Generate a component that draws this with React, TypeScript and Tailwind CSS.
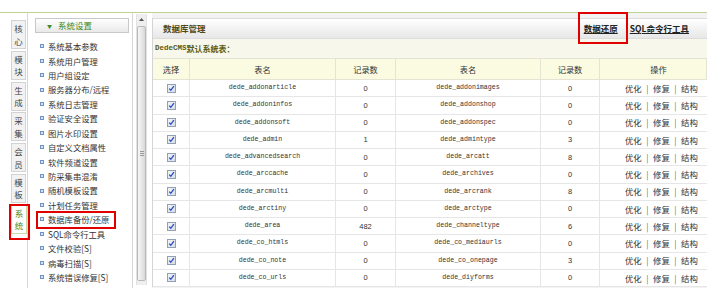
import React from 'react';

const tabs: string[][] = [
  ['核', '心'],
  ['模', '块'],
  ['生', '成'],
  ['采', '集'],
  ['会', '员'],
  ['模', '板'],
  ['系', '统'],
];

const menu: string[] = [
  '系统基本参数',
  '系统用户管理',
  '用户组设定',
  '服务器分布/远程',
  '系统日志管理',
  '验证安全设置',
  '图片水印设置',
  '自定义文档属性',
  '软件频道设置',
  '防采集串混淆',
  '随机模板设置',
  '计划任务管理',
  '数据库备份/还原',
  'SQL命令行工具',
  '文件校验[S]',
  '病毒扫描[S]',
  '系统错误修复[S]',
];

const rows: string[][] = [
  ['dede_addonarticle', '0', 'dede_addonimages', '0'],
  ['dede_addoninfos', '0', 'dede_addonshop', '0'],
  ['dede_addonsoft', '0', 'dede_addonspec', '0'],
  ['dede_admin', '1', 'dede_admintype', '3'],
  ['dede_advancedsearch', '0', 'dede_arcatt', '8'],
  ['dede_arccache', '0', 'dede_archives', '0'],
  ['dede_arcmulti', '0', 'dede_arcrank', '8'],
  ['dede_arctiny', '0', 'dede_arctype', '0'],
  ['dede_area', '482', 'dede_channeltype', '6'],
  ['dede_co_htmls', '0', 'dede_co_mediaurls', '0'],
  ['dede_co_note', '0', 'dede_co_onepage', '3'],
  ['dede_co_urls', '0', 'dede_diyforms', '0'],
];

function Check() {
  return (
    <div className="w-[9px] h-[9px] border border-[#8fa1b8] bg-gradient-to-br from-[#f4f4f4] to-[#d9dde3] flex items-center justify-center">
      <svg width="7" height="7" viewBox="0 0 7 7">
        <path d="M1.2 3.6 L2.8 5.3 L5.9 1.2" fill="none" stroke="#2450c8" strokeWidth="1.3" />
      </svg>
    </div>
  );
}

function Ops() {
  return (
    <div className="flex items-center text-[8.4px] text-[#333] pl-[25px]">
      <span>优化</span>
      <span className="mx-[4.5px] text-[#666]">|</span>
      <span>修复</span>
      <span className="mx-[4.5px] text-[#666]">|</span>
      <span>结构</span>
    </div>
  );
}

export default function App() {
  return (
    <div className="relative w-[723px] h-[297px] bg-white overflow-hidden font-['Noto_Sans_CJK_SC',sans-serif] text-[#333]">
      <div className="h-[12px]" />
      <div className="flex w-[707px] h-[276px] border-t border-[#bad68f]">
        {/* tabs column */}
        <div className="w-[28px] shrink-0 border-r border-[#d6d6d6] flex flex-col gap-[1.8px] pt-[7px] pl-[11px]">
          {tabs.map((t, i) => (
            <div
              key={i}
              className={
                i === 6
                  ? 'w-[16px] h-[29px] border border-[#c6dca6] bg-white text-[#4a8a1c] flex flex-col items-center justify-center text-[8.5px] leading-[12.5px]'
                  : 'w-[15px] h-[29px] border border-[#d3d3d3] bg-[#f2f2f2] text-[#444] flex flex-col items-center justify-center text-[8.5px] leading-[12.5px]'
              }
            >
              <span>{t[0]}</span>
              <span>{t[1]}</span>
            </div>
          ))}
        </div>

        {/* menu column */}
        <div className="w-[105px] shrink-0 border-r border-[#d6d6d6] pt-[5px]">
          <div className="ml-[7px] w-[94px] h-[15px] border border-[#c8c8c8] bg-gradient-to-b from-white to-[#e9e9e9] flex items-center text-[8.5px] text-[#3c8a22]">
            <span className="ml-[11px] text-[5px] leading-none">▼</span>
            <span className="ml-[6px] leading-none">系统设置</span>
          </div>
          <div className="mt-[6px]">
            {menu.map((m) => (
              <div key={m} className="h-[14.44px] flex items-center pl-[12px] text-[8.3px] text-[#333] leading-none">
                <span className="w-[4px] h-[4px] border border-[#6f93c9] bg-[#d3e2f5] mr-[4px] shrink-0" />
                <span className="whitespace-nowrap">{m}</span>
              </div>
            ))}
          </div>
        </div>

        {/* scrollbar */}
        <div className="w-[19px] shrink-0 pt-[1px] pl-[3px]">
          <div className="w-[11px] h-[271px] bg-[#efefef] border-x border-[#e2e2e2] flex flex-col">
            <div className="h-[11px] flex items-center justify-center">
              <svg width="5" height="3" viewBox="0 0 5 3">
                <path d="M0 3 L2.5 0 L5 3 Z" fill="#555" />
              </svg>
            </div>
            <div className="mt-[1px] h-[255px] rounded-[2px] border border-[#b9b9b9] bg-gradient-to-r from-[#f7f7f7] to-[#d9d9d9] flex items-center justify-center">
              <div className="flex flex-col gap-[1px]">
                <div className="w-[4px] h-px bg-[#999]" />
                <div className="w-[4px] h-px bg-[#999]" />
                <div className="w-[4px] h-px bg-[#999]" />
              </div>
            </div>
          </div>
        </div>

        {/* main */}
        <div className="flex-1 bg-[#f3f3f3] pt-[5px]">
          <div className="border-l border-[#d4d4d4] bg-white">
            <div className="h-[21px] border-y border-[#dcdcdc] bg-gradient-to-b from-white to-[#e7e7e7] flex items-center justify-between">
              <span className="pl-[10px] text-[8.5px] font-bold text-[#4d4a1c]">数据库管理</span>
              <div className="flex items-center gap-[12px] pr-[18px] text-[8.5px] font-bold text-[#222]">
                <span className="underline">数据还原</span>
                <span className="underline">SQL命令行工具</span>
              </div>
            </div>
            <div className="h-[19px] bg-[#f7f7ec] flex items-center pl-[2px] font-bold text-[#5a5a10]">
              <span className="font-['Liberation_Mono',monospace] text-[7.5px]">DedeCMS</span>
              <span className="text-[8px]">默认系统表：</span>
            </div>
            <div className="grid grid-cols-[37px_146px_60px_145px_59px_1fr]">
              {['选择', '表名', '记录数', '表名', '记录数', '操作'].map((h, i) => (
                <div
                  key={i}
                  className={
                    i === 5
                      ? 'h-[22px] border-y border-r border-[#e4e4d4] bg-[#fbfbe1] flex items-center justify-center pl-[11px] text-[8.2px] text-[#333]'
                      : 'h-[22px] border-y border-r border-[#e4e4d4] bg-[#fbfbe1] flex items-center justify-center text-[8.2px] text-[#333]'
                  }
                >
                  {h}
                </div>
              ))}
              {rows.map((r, ri) => (
                <React.Fragment key={ri}>
                  <div className="h-[17.25px] border-b border-r border-[#e6e6e6] flex items-center justify-center">
                    <Check />
                  </div>
                  <div className="h-[17.25px] border-b border-r border-[#e6e6e6] flex items-center justify-center font-['Liberation_Mono',monospace] text-[6.6px] text-[#333]">
                    {r[0]}
                  </div>
                  <div className="h-[17.25px] border-b border-r border-[#e6e6e6] flex items-center justify-center font-['Liberation_Sans',sans-serif] text-[7.5px] text-[#333]">
                    {r[1]}
                  </div>
                  <div className="h-[17.25px] border-b border-r border-[#e6e6e6] flex items-center justify-center font-['Liberation_Mono',monospace] text-[6.6px] text-[#333]">
                    {r[2]}
                  </div>
                  <div className="h-[17.25px] border-b border-r border-[#e6e6e6] flex items-center justify-center font-['Liberation_Sans',sans-serif] text-[7.5px] text-[#333]">
                    {r[3]}
                  </div>
                  <div className="h-[17.25px] border-b border-[#e6e6e6] flex items-center">
                    <Ops />
                  </div>
                </React.Fragment>
              ))}
            </div>
          </div>
        </div>
      </div>

      {/* red annotation boxes */}
      <div className="absolute left-[9px] top-[204px] w-[21px] h-[36px] border-2 border-[#e00000]" />
      <div className="absolute left-[36px] top-[211px] w-[80px] h-[18px] border-2 border-[#e00000]" />
      <div className="absolute left-[578px] top-[12px] w-[50px] h-[32px] border-2 border-[#e00000]" />
    </div>
  );
}
